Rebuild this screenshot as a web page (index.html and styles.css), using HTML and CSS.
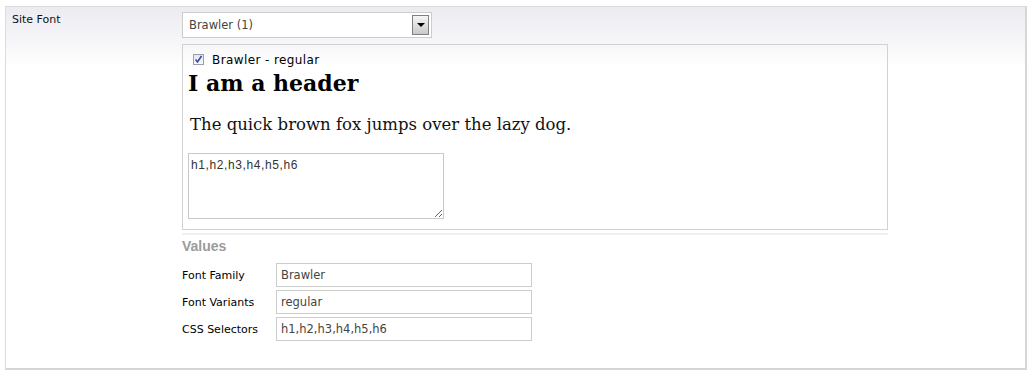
FILE: index.html
```html
<!DOCTYPE html>
<html lang="en">
<head>
  <meta charset="UTF-8" />
  <title>Site Font</title>
  <link rel="stylesheet" href="styles.css">
</head>
<body>

  <div class="panel">
    <div class="field-label">Site Font</div>

    <div class="field">
      <div class="select">
        <span class="select-text">Brawler (1)</span>
        <span class="select-btn"><span class="arrow"></span></span>
      </div>

      <div class="preview">
        <div class="variant">
          <span class="check">
            <svg width="9" height="9" viewBox="0 0 9 9"><path d="M1.5 4.5 L3.5 7 L7.5 1" fill="none" stroke="#3048a8" stroke-width="1.6"/></svg>
          </span>
          <span>Brawler - regular</span>
        </div>
        <h2 class="sample-head">I am a header</h2>
        <p class="sample-text">The quick brown fox jumps over the lazy dog.</p>
        <textarea class="selectors">h1,h2,h3,h4,h5,h6</textarea>
      </div>

      <div class="divider"></div>

      <h3 class="values-title">Values</h3>
      <div class="values">
        <label>Font Family</label>
        <input type="text" value="Brawler">
        <label>Font Variants</label>
        <input type="text" value="regular">
        <label>CSS Selectors</label>
        <input type="text" value="h1,h2,h3,h4,h5,h6">
      </div>
    </div>
  </div>

</body>
</html>
```

FILE: styles.css
```css
body {
  margin: 0;
  padding: 6px 5px;
  background: white;
  font-family: "DejaVu Sans", sans-serif;
  font-size: 11px;
  color: #111;
}

.panel {
  display: flex;
  width: 1019px;
  height: 361px;
  border: 1px solid #dcdcdc;
  border-right: 2px solid #d6d6d6;
  border-bottom: 2px solid #d6d6d6;
  background: linear-gradient(#ebebf1 0px, #f6f6f9 35px, #ffffff 60px);
}

.field-label {
  width: 170px;
  padding: 6px 0 0 6px;
}

.field {
  padding-top: 5px;
}

.select {
  display: flex;
  align-items: center;
  justify-content: space-between;
  box-sizing: border-box;
  width: 250px;
  height: 26px;
  border: 1px solid #cccccc;
  background: white;
  padding: 0 2px 0 6px;
  font-size: 11.5px;
  color: #444;
}

.select-btn {
  display: flex;
  align-items: center;
  justify-content: center;
  box-sizing: border-box;
  width: 17px;
  height: 20px;
  border: 1px solid #808080;
  background: linear-gradient(#f6f6f6, #c9c9c9);
}

.arrow {
  width: 0;
  height: 0;
  border-left: 4px solid transparent;
  border-right: 4px solid transparent;
  border-top: 4px solid #000;
}

.preview {
  box-sizing: border-box;
  width: 706px;
  height: 186px;
  margin-top: 6px;
  border: 1px solid #d2d2d2;
  padding: 8px 0 0 5px;
}

.variant {
  display: flex;
  align-items: center;
  gap: 8px;
  height: 13px;
  padding-left: 5px;
  font-size: 12px;
  letter-spacing: 0.4px;
  color: #000;
}

.check {
  display: flex;
  align-items: center;
  justify-content: center;
  box-sizing: border-box;
  width: 11px;
  height: 11px;
  border: 1px solid #9aa0aa;
  background: linear-gradient(#e4e6ea, #fbfbfc);
}

.sample-head {
  margin: 4px 0 0;
  font-family: "DejaVu Serif", serif;
  font-size: 22px;
  font-weight: bold;
  line-height: 26px;
  color: #000;
}

.sample-text {
  margin: 19px 0 18px 2px;
  font-family: "DejaVu Serif", serif;
  font-size: 16.5px;
  line-height: 20px;
  color: #111;
}

.selectors {
  display: block;
  box-sizing: border-box;
  width: 256px;
  height: 66px;
  margin: 0;
  border: 1px solid #c8c8c8;
  padding: 4px 2px;
  font-family: "Liberation Sans", sans-serif;
  font-size: 12px;
  letter-spacing: 0.6px;
  color: #333;
  outline: none;
}

.divider {
  width: 706px;
  height: 2px;
  margin-top: 3px;
  background: #efefef;
}

.values-title {
  margin: 3px 0 9px;
  font-family: "Liberation Sans", sans-serif;
  font-size: 14px;
  font-weight: bold;
  color: #9b9b9b;
}

.values {
  display: grid;
  grid-template-columns: 94px 256px;
  row-gap: 3px;
  align-items: center;
}

.values label {
  color: #000;
}

.values input {
  box-sizing: border-box;
  height: 24px;
  margin: 0;
  border: 1px solid #cccccc;
  padding: 0 4px;
  font-family: "DejaVu Sans", sans-serif;
  font-size: 11.5px;
  color: #444;
  outline: none;
}
```
